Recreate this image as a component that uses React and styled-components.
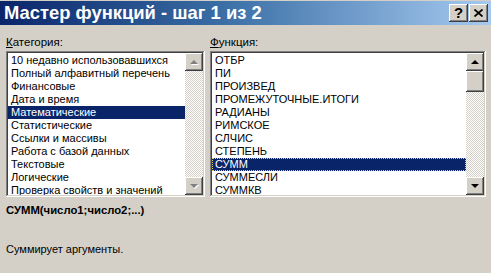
import React from 'react';
import styled, { createGlobalStyle } from 'styled-components';

const GlobalStyle = createGlobalStyle`
  html, body {
    margin: 0;
    padding: 0;
    background: #d4d0c8;
  }
  body {
    font-family: "Liberation Sans", Arial, sans-serif;
    font-size: 11px;
    color: #000;
  }
`;

const Dialog = styled.div`
  width: 491px;
  height: 273px;
  background: #d4d0c8;
  overflow: hidden;
`;

const TitleBar = styled.div`
  height: 24px;
  margin-top: 1px;
  display: flex;
  align-items: center;
  justify-content: space-between;
  padding: 0 3px 0 4px;
  background: linear-gradient(to right, #0a246a 0%, #3a6ea5 45%, #a6caf0 100%);
`;

const Title = styled.div`
  color: #fff;
  font-weight: bold;
  font-size: 18.4px;
  line-height: 24px;
  white-space: nowrap;
`;

const Buttons = styled.div`
  display: flex;
  gap: 1px;
`;

const raised = `
  background: #d4d0c8;
  box-shadow: inset -1px -1px #404040, inset 1px 1px #fff,
    inset -2px -2px #808080, inset 2px 2px #d4d0c8;
`;

const CaptionButton = styled.div`
  ${raised}
  width: 19px;
  height: 18px;
  display: flex;
  align-items: center;
  justify-content: center;
  font-weight: bold;
  font-size: 15px;
  line-height: 18px;
`;

const Body = styled.div`
  padding: 10px 5px 0 6px;
`;

const Columns = styled.div`
  display: grid;
  grid-template-columns: 199px 276px;
  column-gap: 5px;
`;

const Column = styled.div`
  display: flex;
  flex-direction: column;
  gap: 2px;
`;

const Label = styled.div`
  font-size: 11.5px;
  line-height: 14px;
  white-space: nowrap;
  u {
    text-decoration: underline;
    text-underline-offset: 1px;
  }
`;

const ListBox = styled.div`
  height: 146px;
  box-sizing: border-box;
  padding: 2px;
  display: flex;
  background: #fff;
  box-shadow: inset -1px -1px #fff, inset 1px 1px #808080,
    inset -2px -2px #d4d0c8, inset 2px 2px #404040;
`;

const Items = styled.div`
  flex: 1;
  overflow: hidden;
  padding-top: 1px;
`;

const Item = styled.div`
  height: 13px;
  line-height: 11px;
  padding-left: 2px;
  white-space: nowrap;
  box-sizing: border-box;
  background: ${(p) => (p.$selected ? '#0a246a' : 'transparent')};
  color: ${(p) => (p.$selected ? '#fff' : '#000')};
  border: 1px dotted ${(p) => (p.$focus ? '#e8d44a' : 'transparent')};
`;

const ScrollBar = styled.div`
  width: 18px;
  display: flex;
  flex-direction: column;
`;

const ArrowButton = styled.div`
  ${raised}
  height: 18px;
  flex: none;
  display: flex;
  align-items: center;
  justify-content: center;
`;

const Track = styled.div`
  flex: ${(p) => p.$grow ?? 1};
  height: ${(p) => (p.$h ? `${p.$h}px` : 'auto')};
  background: repeating-conic-gradient(#fff 0 25%, #d4d0c8 0 50%) 0 0 / 2px 2px;
`;

const Thumb = styled.div`
  ${raised}
  height: 21px;
  flex: none;
`;

const Formula = styled.div`
  font-weight: bold;
  font-size: 11.3px;
  margin-top: 6px;
  line-height: 14px;
`;

const Description = styled.div`
  margin-top: 25px;
  line-height: 14px;
`;

const Arrow = ({ down, disabled }) => (
  <svg width="10" height="7" viewBox="0 0 10 7">
    {disabled && (
      <polygon
        points={down ? '2,2 10,2 6,6 ' : '2,6 10,6 6,2'}
        fill="#fff"
      />
    )}
    <polygon
      points={down ? '1,1 9,1 5,5' : '1,5 9,5 5,1'}
      fill={disabled ? '#808080' : '#000'}
    />
  </svg>
);

const categories = [
  '10 недавно использовавшихся',
  'Полный алфавитный перечень',
  'Финансовые',
  'Дата и время',
  'Математические',
  'Статистические',
  'Ссылки и массивы',
  'Работа с базой данных',
  'Текстовые',
  'Логические',
  'Проверка свойств и значений',
];

const functions = [
  'ОТБР',
  'ПИ',
  'ПРОИЗВЕД',
  'ПРОМЕЖУТОЧНЫЕ.ИТОГИ',
  'РАДИАНЫ',
  'РИМСКОЕ',
  'СЛЧИС',
  'СТЕПЕНЬ',
  'СУММ',
  'СУММЕСЛИ',
  'СУММКВ',
];

const App = () => (
  <Dialog>
    <GlobalStyle />
    <TitleBar>
      <Title>Мастер функций - шаг 1 из 2</Title>
      <Buttons>
        <CaptionButton>?</CaptionButton>
        <CaptionButton>
          <svg width="9" height="8" viewBox="0 0 9 8">
            <path d="M0.5 0.5 L8.5 7.5 M8.5 0.5 L0.5 7.5" stroke="#000" strokeWidth="1.8" />
          </svg>
        </CaptionButton>
      </Buttons>
    </TitleBar>
    <Body>
      <Columns>
        <Column>
          <Label>
            <u>К</u>атегория:
          </Label>
          <ListBox>
            <Items>
              {categories.map((c) => (
                <Item key={c} $selected={c === 'Математические'}>
                  {c}
                </Item>
              ))}
            </Items>
            <ScrollBar>
              <ArrowButton>
                <Arrow disabled />
              </ArrowButton>
              <Track />
              <ArrowButton>
                <Arrow down disabled />
              </ArrowButton>
            </ScrollBar>
          </ListBox>
        </Column>
        <Column>
          <Label>
            <u>Ф</u>ункция:
          </Label>
          <ListBox>
            <Items>
              {functions.map((f) => (
                <Item key={f} $selected={f === 'СУММ'} $focus={f === 'СУММ'}>
                  {f}
                </Item>
              ))}
            </Items>
            <ScrollBar>
              <ArrowButton>
                <Arrow />
              </ArrowButton>
              <Track $grow={0} $h={66} />
              <Thumb />
              <Track />
              <ArrowButton>
                <Arrow down />
              </ArrowButton>
            </ScrollBar>
          </ListBox>
        </Column>
      </Columns>
      <Formula>СУММ(число1;число2;...)</Formula>
      <Description>Суммирует аргументы.</Description>
    </Body>
  </Dialog>
);

export default App;
